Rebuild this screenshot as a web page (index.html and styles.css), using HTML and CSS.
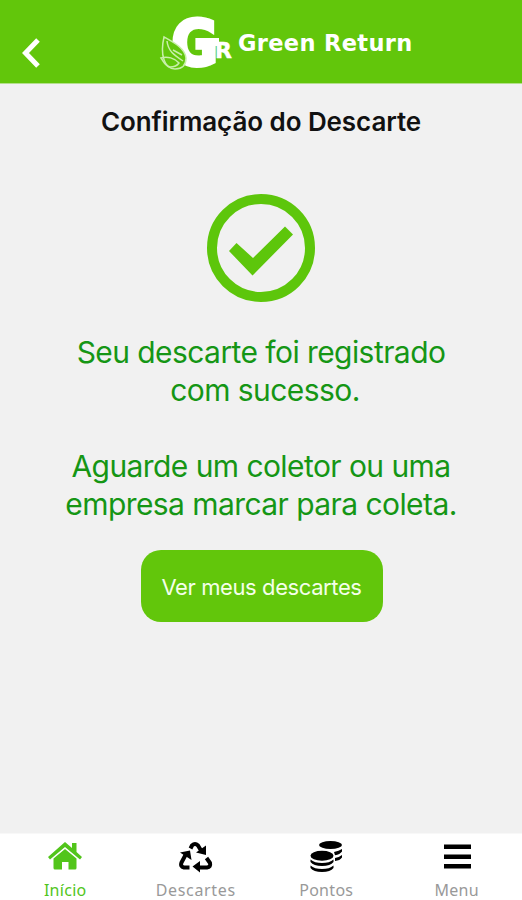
FILE: index.html
```html
<!DOCTYPE html>
<html lang="pt-BR">
<head>
  <meta charset="UTF-8">
  <title>Green Return</title>
  <meta name="viewport" content="width=device-width, initial-scale=1.0">
  <link rel="stylesheet" href="styles.css">
</head>
<body>
  <header class="header">
    <a href="#" class="back" aria-label="Voltar">
      <svg width="22" height="32" viewBox="0 0 22 32"><path d="M18 3L5.500 16 18 29" fill="none" stroke="#fff" stroke-width="5"/></svg>
    </a>
    <div class="brand">
      <svg class="logo" width="76" height="83" viewBox="0 0 76 83">
        <text class="logo-g" transform="translate(12.500 64.500) scale(.9 1)">G</text>
        <path d="M37 38h23v8H37z" fill="#fff"/>
        <text class="logo-r" x="56" y="57.500">R</text>
        <g class="leaf">
          <path d="M5 37c9 5 21 11 22 21 0 7-4 11-11 11C5 69 1 54 5 37z"/>
          <path d="M8 41c1 10 7 14 16 20M14 50l9 5M2 58c6-2 14 0 18 5-2 3-5 4-9 4-5-1-6-5-9-9z"/>
        </g>
      </svg>
      <span class="brand-name">Green Return</span>
    </div>
  </header>

  <main class="content">
    <h1>Confirmação do Descarte</h1>
    <svg class="check" width="108" height="108" viewBox="0 0 108 108">
      <circle cx="54" cy="54" r="49" fill="none" stroke="#5dc60b" stroke-width="10"/>
      <path d="M22 57l7.500-8 16.500 15L78 32.500l8 8-40.500 41z" fill="#5dc60b"/>
    </svg>
    <div class="message">
      <p>Seu descarte foi registrado<br><span class="indent">com sucesso.</span></p>
      <p>Aguarde um coletor ou uma<br>empresa marcar para coleta.</p>
    </div>
    <button class="btn">Ver meus descartes</button>
  </main>

  <nav class="tabs">
    <a href="#" class="tab active">
      <svg width="34" height="32" viewBox="0 0 34 32" fill="currentColor">
        <path d="M17 1l7 6V2h4.500v9L34 16l-2 2.500L17 6 2 18.500 0 16z"/>
        <path d="M17 8l11.500 9.500V27q0 1.500-1.500 1.500h-6.500V21h-6.500v7.500H7q-1.500 0-1.500-1.500v-9.500z"/>
      </svg>
      <span>Início</span>
    </a>
    <a href="#" class="tab wide">
      <svg width="34" height="32" viewBox="0 0 34 32">
        <g fill="none" stroke="#000" stroke-width="4" stroke-linejoin="round">
          <path d="M11.500 7.500l1.500-3q3-3 6 0l3 5"/>
          <path d="M27.500 17l3.500 5q1 4-3 4.500h-7"/>
          <path d="M10.500 26.500H5q-4-1-2.500-5L6.500 14"/>
        </g>
        <path d="M27 4.500V14l-10-2.500zM21 20v11.500l-7.500-6zM1 11.500l10-2 1.500 9.500z"/>
      </svg>
      <span>Descartes</span>
    </a>
    <a href="#" class="tab">
      <svg width="34" height="32" viewBox="0 0 34 32">
        <ellipse cx="21.500" cy="4" rx="11.500" ry="4"/>
        <path d="M25 11q5-.8 8-3v2.500q-2 3-7 3.800zM26 17q4-.6 7-3v2.500q-2 3-7 3.500z"/>
        <ellipse cx="13" cy="14.800" rx="11.500" ry="5"/>
        <path d="M1.500 18.500q4 3.500 11.500 3.500t11.500-3.500V21q-3 4-11.500 4T1.500 21zM1.500 24.500Q5.500 28 13 28t11.500-3.500V27q-3 4-11.500 4T1.500 27z"/>
      </svg>
      <span>Pontos</span>
    </a>
    <a href="#" class="tab">
      <svg width="34" height="32" viewBox="0 0 34 32"><path d="M4 3.500h27V8H4zM4 13.500h27V18H4zM4 23h27v4.500H4z"/></svg>
      <span>Menu</span>
    </a>
  </nav>
</body>
</html>
```
FILE: styles.css
```css
* {
  box-sizing: border-box;
}

body {
  display: flex;
  flex-direction: column;
  height: 100vh;
  margin: 0;
  background: #f1f1f1;
  font-family: Inter, "Liberation Sans", sans-serif;
}

a {
  color: inherit;
  text-decoration: none;
}

svg {
  display: block;
}

.header {
  display: flex;
  height: 84px;
  padding-left: 20px;
  background: #62c60b;
  border-bottom: 1px solid #b4df8d;
}

.back {
  width: 22px;
  margin: 37px 117px 0 0;
}

.brand {
  display: flex;
  color: #fff;
}

.logo-g,
.logo-r {
  font-family: "DejaVu Sans", sans-serif;
  font-weight: bold;
  font-size: 63px;
  fill: #fff;
  stroke: #fff;
  stroke-width: 4px;
}

.logo-r {
  font-size: 22px;
  stroke-width: 0.5px;
}

.leaf {
  fill: #62c60b;
  stroke: #c8efaa;
  stroke-width: 1.5px;
}

.leaf path + path {
  fill: none;
}

.brand-name {
  margin: 28px 0 0 3px;
  font: bold 22.5px/30px "DejaVu Sans", sans-serif;
  letter-spacing: 0.35px;
}

.content {
  flex: 1;
  display: flex;
  flex-direction: column;
  align-items: center;
}

h1 {
  margin: 22px 0 0;
  font-size: 26px;
  line-height: 32px;
  font-weight: 600;
  letter-spacing: -0.08px;
  color: #111;
}

.check {
  margin-top: 56px;
}

.message {
  margin-top: 31px;
  text-align: center;
  color: #159615;
  font-size: 30px;
  line-height: 38px;
  letter-spacing: -0.57px;
}

.message p {
  margin: 0 0 38px;
}

.indent {
  padding-left: 8px;
}

.btn {
  width: 242px;
  height: 72px;
  margin: -11px 0 0 1px;
  padding-top: 3px;
  border: 0;
  border-radius: 20px;
  background: #62c60b;
  color: #f4ffe9;
  font-family: inherit;
  font-size: 22px;
  letter-spacing: -0.4px;
}

.tabs {
  display: grid;
  grid-template-columns: repeat(4, 1fr);
  height: 67px;
  background: #fff;
  border-top: 1px solid #f8f8f8;
}

.tab {
  display: flex;
  flex-direction: column;
  align-items: center;
  padding-top: 7px;
  font-family: "Noto Sans", sans-serif;
  font-size: 16px;
  line-height: 20px;
  letter-spacing: 0.3px;
}

.tab span {
  margin-top: 7px;
  color: #999;
}

.wide {
  letter-spacing: 0.65px;
}

.active,
.tab.active span {
  color: #52c51b;
}
```
